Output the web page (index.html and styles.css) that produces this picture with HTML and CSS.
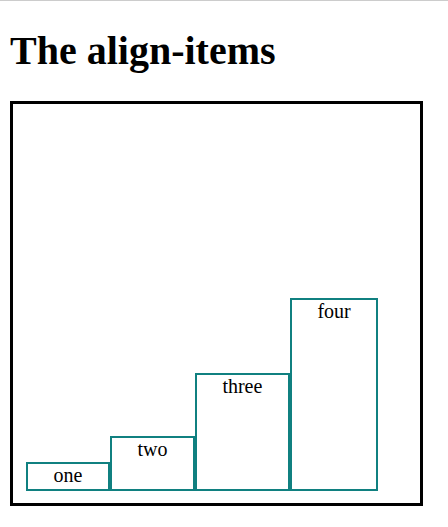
FILE: index.html
```html
<!DOCTYPE html>
<html>
<head>
<meta charset="utf-8">
<title>The align-items</title>
<link rel="stylesheet" href="styles.css">
</head>
<body>
<h1 class="title">The align-items</h1>
<div class="box">
  <div class="item item-one">one</div>
  <div class="item item-two">two</div>
  <div class="item item-three">three</div>
  <div class="item item-four">four</div>
</div>
</body>
</html>
```
FILE: styles.css
```css
html {
  border-top: 1px solid #cccccc;
}
body {
  margin: 0 10px 10px;
  font-family: "Liberation Serif", "Times New Roman", serif;
  font-size: 20px;
  color: #000;
  background: #fff;
}
.title {
  font-size: 40px;
  font-weight: bold;
  margin: 26px 0 27px;
}
.box {
  box-sizing: border-box;
  width: 413px;
  height: 405px;
  border: 3px solid #000;
  padding: 13px 13px 12px;
  display: flex;
  align-items: flex-end;
}
.item {
  box-sizing: border-box;
  border: 2px solid #108080;
  padding: 0 25.5px;
  text-align: center;
  line-height: 23px;
}
.item-one { height: 29px; }
.item-two { height: 55px; }
.item-three { height: 118px; }
.item-four { height: 193px; }
```
